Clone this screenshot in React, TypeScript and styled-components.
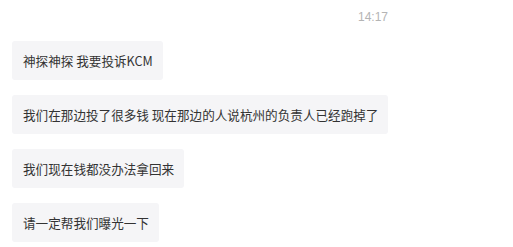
import React from "react";
import styled, { createGlobalStyle } from "styled-components";

const Global = createGlobalStyle`
  html, body { margin: 0; padding: 0; background: #ffffff; }
  body { font-family: "Microsoft YaHei", "Noto Sans CJK SC", "Noto Sans", sans-serif; }
`;

const Chat = styled.div`
  width: 378px;
  padding: 9px 0 0 12px;
  display: flex;
  flex-direction: column;
  align-items: flex-start;
`;

const Time = styled.div`
  align-self: flex-end;
  margin-right: 2px;
  font-family: "Liberation Sans", Arial, sans-serif;
  font-size: 12px;
  line-height: 16px;
  color: #b4b4b4;
  margin-bottom: 16px;
`;

const Bubble = styled.div`
  box-sizing: border-box;
  height: 39px;
  line-height: 39px;
  padding: 0 10px 0 11px;
  margin-bottom: 15px;
  background: #f5f5f7;
  border-radius: 3px;
  font-size: 12.6px;
  color: #333333;
  white-space: nowrap;
  font-family: "Noto Sans CJK SC", sans-serif;
`;

const messages = [
  "神探神探 我要投诉KCM",
  "我们在那边投了很多钱 现在那边的人说杭州的负责人已经跑掉了",
  "我们现在钱都没办法拿回来",
  "请一定帮我们曝光一下",
];

export default function App() {
  return (
    <>
      <Global />
      <Chat>
        <Time>14:17</Time>
        {messages.map((m) => (
          <Bubble key={m}>{m}</Bubble>
        ))}
      </Chat>
    </>
  );
}
